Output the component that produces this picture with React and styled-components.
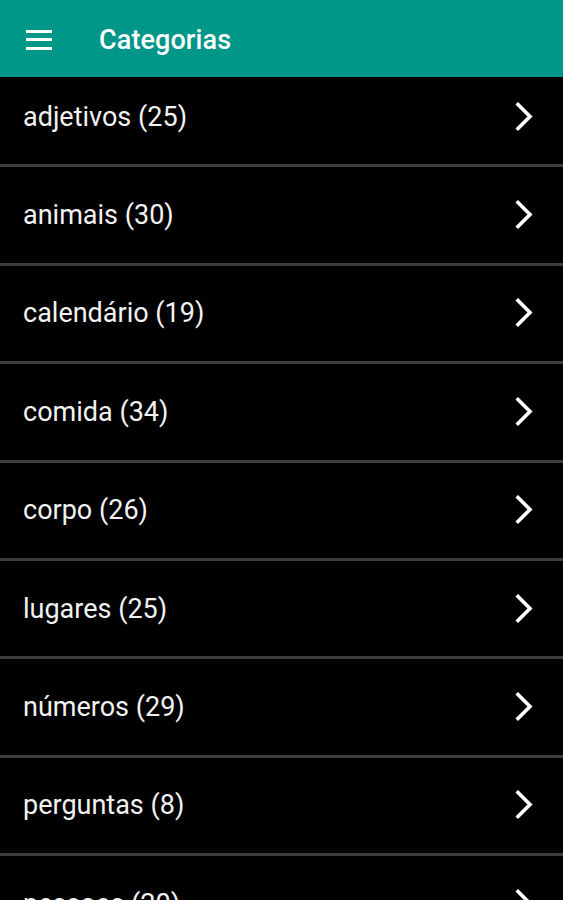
import React from 'react';
import styled, { createGlobalStyle } from 'styled-components';

const GlobalStyle = createGlobalStyle`
  html, body {
    margin: 0;
    padding: 0;
    background: #000;
  }
  body {
    font-family: Roboto, "Noto Sans", "Liberation Sans", sans-serif;
  }
`;

const Screen = styled.div`
  width: 563px;
  height: 900px;
  display: flex;
  flex-direction: column;
  background: #000;
  overflow: hidden;
`;

const AppBar = styled.header`
  flex: 0 0 77px;
  display: flex;
  align-items: center;
  background: #009688;
  position: relative;
  z-index: 1;
`;

const MenuButton = styled.button`
  width: 26px;
  height: 20px;
  margin-left: 26px;
  margin-top: 2px;
  padding: 0;
  border: none;
  background: transparent;
  display: flex;
  flex-direction: column;
  justify-content: space-between;
  cursor: pointer;
`;

const MenuLine = styled.span`
  display: block;
  height: 3px;
  background: #fff;
`;

const Title = styled.h1`
  margin: 2px 0 0 47px;
  color: #fff;
  font-size: 27px;
  font-weight: 500;
  letter-spacing: 0.1px;
`;

const Viewport = styled.div`
  flex: 1;
  overflow: hidden;
`;

const List = styled.ul`
  list-style: none;
  margin: -8px 0 0;
  padding: 0;
`;

const Row = styled.li`
  height: 95.4px;
  border-bottom: 3px solid #3c3c3c;
  display: flex;
  align-items: center;
  justify-content: space-between;
  padding: 0 27px 0 23px;
  color: #f2f2f2;
  font-size: 27px;
  cursor: pointer;
`;

const Chevron = () => (
  <svg width="22" height="30" viewBox="0 0 22 30" fill="none">
    <path d="M4 2.5 L16 14.5 L4 26.5" stroke="#fff" strokeWidth="3.6" strokeLinecap="square" />
  </svg>
);

const categories = [
  ['adjetivos', 25],
  ['animais', 30],
  ['calendário', 19],
  ['comida', 34],
  ['corpo', 26],
  ['lugares', 25],
  ['números', 29],
  ['perguntas', 8],
  ['pessoas', 20],
];

export default function App() {
  return (
    <Screen>
      <GlobalStyle />
      <AppBar>
        <MenuButton aria-label="menu">
          <MenuLine />
          <MenuLine />
          <MenuLine />
        </MenuButton>
        <Title>Categorias</Title>
      </AppBar>
      <Viewport>
        <List>
          {categories.map(([name, count]) => (
            <Row key={name}>
              <span>{name} ({count})</span>
              <Chevron />
            </Row>
          ))}
        </List>
      </Viewport>
    </Screen>
  );
}
